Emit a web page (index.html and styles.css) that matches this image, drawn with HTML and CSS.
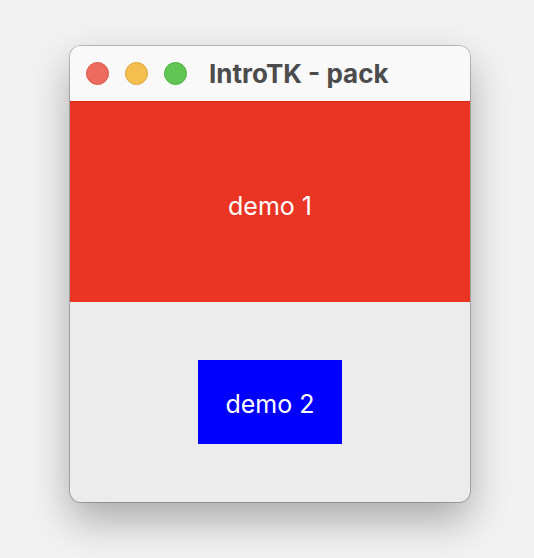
FILE: index.html
```html
<!DOCTYPE html>
<html>
<head>
<meta charset="utf-8">
<link rel="stylesheet" href="styles.css">
</head>
<body>
<div class="window">
  <div class="titlebar">
    <div class="lights">
      <span class="light close"></span>
      <span class="light min"></span>
      <span class="light max"></span>
    </div>
    <div class="title">IntroTK - pack</div>
  </div>
  <div class="demo1">demo 1</div>
  <div class="lower">
    <div class="demo2">demo 2</div>
  </div>
</div>
</body>
</html>
```
FILE: styles.css
```css
html, body {
  margin: 0;
  padding: 0;
}
body {
  width: 534px;
  height: 558px;
  background: #f2f2f2;
  padding-top: 46px;
  box-sizing: border-box;
  font-family: Inter, "Liberation Sans", Arial, sans-serif;
  overflow: hidden;
}
.window {
  margin-left: 70px;
  width: 400px;
  height: 456px;
  border-radius: 11px;
  overflow: hidden;
  background: #ececec;
  box-shadow: 0 0 0 1px rgba(0,0,0,0.22), 0 18px 40px rgba(0,0,0,0.30);
  display: flex;
  flex-direction: column;
}
.titlebar {
  height: 55px;
  background: #f9f9f9;
  display: flex;
  align-items: center;
  padding-left: 16px;
  flex-shrink: 0;
}
.lights {
  display: flex;
  gap: 16px;
}
.light {
  width: 23px;
  height: 23px;
  border-radius: 50%;
  box-sizing: border-box;
}
.close { background: #ed6a5e; border: 1px solid #d8574b; }
.min { background: #f5bf4f; border: 1px solid #d9a53c; }
.max { background: #61c554; border: 1px solid #4fad43; }
.title {
  margin-left: 22px;
  font-size: 26px;
  font-weight: bold;
  color: #4c4c4c;
}
.demo1 {
  height: 201px;
  background: #ea3424;
  border-top: 1px solid #d32414;
  box-sizing: border-box;
  display: flex;
  align-items: center;
  justify-content: center;
  padding-top: 8px;
  color: #ffffff;
  font-size: 25px;
  flex-shrink: 0;
}
.lower {
  flex: 1;
  display: flex;
  align-items: center;
  justify-content: center;
}
.demo2 {
  width: 144px;
  height: 84px;
  background: #0000ff;
  color: #ffffff;
  font-size: 25px;
  padding-top: 3px;
  box-sizing: border-box;
  display: flex;
  align-items: center;
  justify-content: center;
}
```
